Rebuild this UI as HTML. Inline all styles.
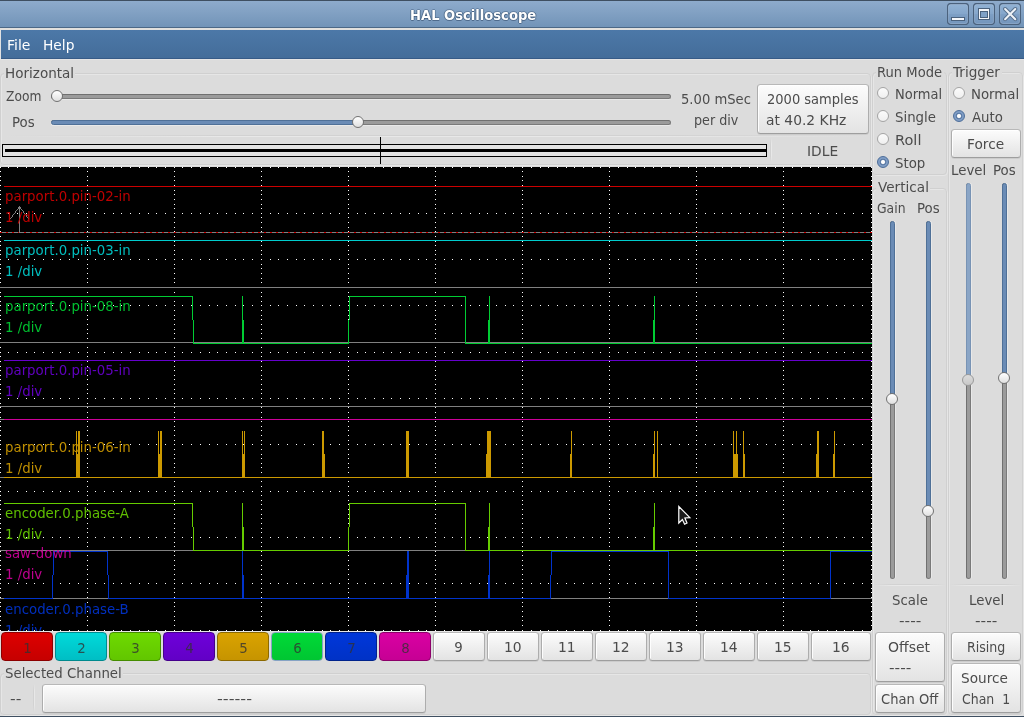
<!DOCTYPE html>
<html lang="en"><head><meta charset="utf-8"><title>HAL Oscilloscope</title>
<style>
html,body{margin:0;padding:0}
body{background:#dcdcdc;overflow:hidden}
#win{will-change:transform;position:relative;width:1024px;height:717px;overflow:hidden;background:#dcdcdc;
 font-family:"DejaVu Sans","Liberation Sans",sans-serif;font-size:13.333px;line-height:15px;color:#4c4c4c}
#win *{position:absolute;box-sizing:border-box}
.t{white-space:pre;height:15px}
#titlebar{left:0;top:0;width:1024px;height:28px;background:linear-gradient(#8eabcc,#7294b8);
 border-top:1px solid #3f4f61;border-bottom:1px solid #4c6886}
.title{color:#fff;font-weight:bold;text-shadow:0 1px 0 rgba(45,70,100,.55),0 -1px 0 rgba(45,70,100,.35),1px 0 0 rgba(45,70,100,.45),-1px 0 0 rgba(45,70,100,.45)}
.wbs{display:block}
#lightline{left:0;top:28px;width:1024px;height:2px;background:#e1e0dd}
#menubar{left:1px;top:30px;width:1023px;height:29px;background:linear-gradient(#4c78a8,#446d9a);
 border-bottom:1px solid #375b87;color:#fff}
#menubar .t{color:#fff}
.btn{border:1px solid #adadad;border-top-color:#b8b8b8;border-bottom-color:#9e9e9e;border-radius:3.5px;background:linear-gradient(#fcfcfc,#e3e3e3);
 box-shadow:0 1px 0 rgba(0,0,0,.07),inset 1px 1px 0 rgba(255,255,255,.9)}
.radio{width:12px;height:12px;border-radius:50%;border:1px solid #a4a4a4;background:linear-gradient(#fbfbfb,#efefef)}
.radio.on{border-color:#4c6d99;background:radial-gradient(circle at 50% 50%,#fff 0,#fff 1.5px,#4e6f9c 2.7px,#809ec6 3.7px,#7a98c0 100%)}
.trk{background:#9b9b9b;border:1px solid #7a7a7a;border-radius:3px}
.trk.h{height:5px;border-top-color:#707070;box-shadow:0 1px 0 #e9e9e9}
.trk.v{width:5px;border-left-color:#707070;box-shadow:1px 0 0 #e9e9e9}
.trk.fill{background:#6a8bb5;border-color:#4f7097}
.trk.fill.dis{background:#8aa5c6;border-color:#7893b4}
.knob{width:12px;height:12px;border-radius:50%;border:1px solid #727272;background:linear-gradient(#ffffff,#e0e0e0)}
.knob.dis{background:linear-gradient(#dcdcdc,#c8c8c8);border-color:#9a9a9a}
.frame{border:1px solid #d0d0d0;border-radius:4px}
.frame.lt{border-color:#e6e6e6}
.gap{background:#dcdcdc}
.sepv{width:2px;background:linear-gradient(rgba(210,210,210,0),#d2d2d2 25%,#d2d2d2 75%,rgba(210,210,210,0)) 0 0/1px 100% no-repeat,linear-gradient(rgba(232,232,232,0),#e8e8e8 25%,#e8e8e8 75%,rgba(232,232,232,0)) 1px 0/1px 100% no-repeat}
.seph{height:2px;background:linear-gradient(90deg,rgba(210,210,210,0),#d2d2d2 25%,#d2d2d2 75%,rgba(210,210,210,0)) 0 0/100% 1px no-repeat,linear-gradient(90deg,rgba(232,232,232,0),#e8e8e8 25%,#e8e8e8 75%,rgba(232,232,232,0)) 0 1px/100% 1px no-repeat}
.scope{display:block}
.chb{border:1px solid #888;border-radius:4px}
.chb .t{color:rgba(50,50,50,.8)}
.chb .t.c,.btn .t.c{left:0;right:0;text-align:center}
</style></head><body><div id="win">
<div id="titlebar"></div>
<div class="t title" style="top:8px;left:410.02px;transform:scaleX(0.9843);transform-origin:0 0;">HAL Oscilloscope</div>
<svg width="0" height="0" style="left:0;top:0"><defs><linearGradient id="wbg" x1="0" y1="0" x2="0" y2="1"><stop offset="0" stop-color="#93b3d5"/><stop offset=".5" stop-color="#84a6cb"/><stop offset=".52" stop-color="#7d9fc5"/><stop offset="1" stop-color="#7395bb"/></linearGradient></defs></svg>
<svg class="wbs" style="left:947px;top:3px" width="22" height="22" viewBox="0 0 22 22"><rect x=".5" y=".5" width="21" height="21" rx="3.2" fill="url(#wbg)" stroke="#4b627d" stroke-width="1.25"/><rect x="1.5" y="1.5" width="19" height="19" rx="2.2" fill="none" stroke="#fff" stroke-opacity=".13"/><g shape-rendering="crispEdges"><rect x="4" y="14" width="14" height="4" fill="#4b627d"/><rect x="5" y="15" width="12" height="2" fill="#f4f6f9"/></g></svg>
<svg class="wbs" style="left:973px;top:3px" width="22" height="22" viewBox="0 0 22 22"><rect x=".5" y=".5" width="21" height="21" rx="3.2" fill="url(#wbg)" stroke="#4b627d" stroke-width="1.25"/><rect x="1.5" y="1.5" width="19" height="19" rx="2.2" fill="none" stroke="#fff" stroke-opacity=".13"/><g shape-rendering="crispEdges"><rect x="5" y="5" width="12" height="12" fill="#4b627d"/><rect x="6" y="6" width="10" height="10" fill="#f4f6f9"/><rect x="7" y="8" width="8" height="7" fill="#4b627d"/><rect x="8" y="9" width="6" height="5" fill="#7fa1c6"/></g></svg>
<svg class="wbs" style="left:999px;top:3px" width="22" height="22" viewBox="0 0 22 22"><rect x=".5" y=".5" width="21" height="21" rx="3.2" fill="url(#wbg)" stroke="#4b627d" stroke-width="1.25"/><rect x="1.5" y="1.5" width="19" height="19" rx="2.2" fill="none" stroke="#fff" stroke-opacity=".13"/><path d="M6.1 6L16.3 16.2M16.3 6L6.1 16.2" stroke="#4b627d" stroke-width="4" stroke-linecap="round" fill="none" stroke-opacity=".8"/><path d="M6.1 6L16.3 16.2M16.3 6L6.1 16.2" stroke="#eef2f7" stroke-width="2" stroke-linecap="round" fill="none"/></svg>
<div id="lightline"></div>
<div id="menubar"><div class="t" style="top:8px;left:5.95px;transform:scaleX(1.0476);transform-origin:0 0;">File</div><div class="t" style="top:8px;left:41.97px;transform:scaleX(1.0345);transform-origin:0 0;">Help</div></div>
<div style="left:0;top:30px;width:1px;height:29px;background:#e2e2e2"></div>
<div style="left:0;top:59px;width:1024px;height:1px;background:#e4e4e4"></div>
<div class="frame lt" style="left:1px;top:74px;width:871px;height:92px"></div><div class="frame" style="left:0px;top:73px;width:871px;height:92px"></div><div class="gap" style="left:4px;top:73px;width:71px;height:2px"></div>
<div class="t" style="top:66px;left:4.98px;transform:scaleX(1.0152);transform-origin:0 0;">Horizontal</div>
<div class="t" style="top:89px;left:6.00px;transform:scaleX(0.9211);transform-origin:0 0;">Zoom</div>
<div class="trk h" style="left:51px;top:94px;width:620px"></div><div class="knob" style="left:51px;top:90px"></div>
<div class="t" style="top:115px;left:12.00px;">Pos</div>
<div class="trk h" style="left:51px;top:120px;width:620px"></div><div class="trk h fill" style="left:51px;top:120px;width:308px"></div><div class="knob" style="left:352px;top:116px"></div>
<div class="t" style="top:92px;left:681.01px;transform:scaleX(0.9855);transform-origin:0 0;">5.00 mSec</div>
<div class="t" style="top:113px;left:694.04px;transform:scaleX(0.9556);transform-origin:0 0;">per div</div>
<div class="btn " style="left:757px;top:84px;width:112px;height:50px"><div class="t" style="top:7px;left:9.02px;transform:scaleX(0.9783);transform-origin:0 0;">2000 samples</div><div class="t" style="top:28px;left:7.96px;transform:scaleX(1.0395);transform-origin:0 0;">at 40.2 KHz</div></div>
<div class="seph" style="left:2px;top:135px;width:868px"></div>
<div style="left:2px;top:144px;width:765px;height:13px;border:1px solid #000;background:#e2e2e2"></div>
<div style="left:5px;top:149px;width:762px;height:3px;background:#000"></div>
<div style="left:380px;top:137px;width:1px;height:27px;background:#000"></div>
<div class="sepv" style="left:770px;top:138px;height:24px"></div>
<div class="t" style="top:144px;left:806.96px;transform:scaleX(1.0357);transform-origin:0 0;">IDLE</div>
<svg class="scope" width="872" height="464" viewBox="0 0 872 464" shape-rendering="crispEdges" style="left:0px;top:167px"><rect width="872" height="464" fill="#000"/><path fill="#fff" d="M0 0h1v1h-1zM8 0h1v1h-1zM17 0h1v1h-1zM26 0h1v1h-1zM34 0h1v1h-1zM43 0h1v1h-1zM52 0h1v1h-1zM60 0h1v1h-1zM69 0h1v1h-1zM78 0h1v1h-1zM87 0h1v1h-1zM95 0h1v1h-1zM104 0h1v1h-1zM113 0h1v1h-1zM121 0h1v1h-1zM130 0h1v1h-1zM139 0h1v1h-1zM148 0h1v1h-1zM156 0h1v1h-1zM165 0h1v1h-1zM174 0h1v1h-1zM182 0h1v1h-1zM191 0h1v1h-1zM200 0h1v1h-1zM209 0h1v1h-1zM217 0h1v1h-1zM226 0h1v1h-1zM235 0h1v1h-1zM243 0h1v1h-1zM252 0h1v1h-1zM261 0h1v1h-1zM270 0h1v1h-1zM278 0h1v1h-1zM287 0h1v1h-1zM296 0h1v1h-1zM304 0h1v1h-1zM313 0h1v1h-1zM322 0h1v1h-1zM330 0h1v1h-1zM339 0h1v1h-1zM348 0h1v1h-1zM357 0h1v1h-1zM365 0h1v1h-1zM374 0h1v1h-1zM383 0h1v1h-1zM391 0h1v1h-1zM400 0h1v1h-1zM409 0h1v1h-1zM418 0h1v1h-1zM426 0h1v1h-1zM435 0h1v1h-1zM444 0h1v1h-1zM452 0h1v1h-1zM461 0h1v1h-1zM470 0h1v1h-1zM479 0h1v1h-1zM487 0h1v1h-1zM496 0h1v1h-1zM505 0h1v1h-1zM513 0h1v1h-1zM522 0h1v1h-1zM531 0h1v1h-1zM540 0h1v1h-1zM548 0h1v1h-1zM557 0h1v1h-1zM566 0h1v1h-1zM574 0h1v1h-1zM583 0h1v1h-1zM592 0h1v1h-1zM600 0h1v1h-1zM609 0h1v1h-1zM618 0h1v1h-1zM627 0h1v1h-1zM635 0h1v1h-1zM644 0h1v1h-1zM653 0h1v1h-1zM661 0h1v1h-1zM670 0h1v1h-1zM679 0h1v1h-1zM688 0h1v1h-1zM696 0h1v1h-1zM705 0h1v1h-1zM714 0h1v1h-1zM722 0h1v1h-1zM731 0h1v1h-1zM740 0h1v1h-1zM749 0h1v1h-1zM757 0h1v1h-1zM766 0h1v1h-1zM775 0h1v1h-1zM783 0h1v1h-1zM792 0h1v1h-1zM801 0h1v1h-1zM810 0h1v1h-1zM818 0h1v1h-1zM827 0h1v1h-1zM836 0h1v1h-1zM844 0h1v1h-1zM853 0h1v1h-1zM862 0h1v1h-1zM871 0h1v1h-1zM0 4h1v1h-1zM87 4h1v1h-1zM174 4h1v1h-1zM261 4h1v1h-1zM348 4h1v1h-1zM435 4h1v1h-1zM522 4h1v1h-1zM609 4h1v1h-1zM696 4h1v1h-1zM783 4h1v1h-1zM871 4h1v1h-1zM0 9h1v1h-1zM87 9h1v1h-1zM174 9h1v1h-1zM261 9h1v1h-1zM348 9h1v1h-1zM435 9h1v1h-1zM522 9h1v1h-1zM609 9h1v1h-1zM696 9h1v1h-1zM783 9h1v1h-1zM871 9h1v1h-1zM0 13h1v1h-1zM87 13h1v1h-1zM174 13h1v1h-1zM261 13h1v1h-1zM348 13h1v1h-1zM435 13h1v1h-1zM522 13h1v1h-1zM609 13h1v1h-1zM696 13h1v1h-1zM783 13h1v1h-1zM871 13h1v1h-1zM0 18h1v1h-1zM87 18h1v1h-1zM174 18h1v1h-1zM261 18h1v1h-1zM348 18h1v1h-1zM435 18h1v1h-1zM522 18h1v1h-1zM609 18h1v1h-1zM696 18h1v1h-1zM783 18h1v1h-1zM871 18h1v1h-1zM0 23h1v1h-1zM87 23h1v1h-1zM174 23h1v1h-1zM261 23h1v1h-1zM348 23h1v1h-1zM435 23h1v1h-1zM522 23h1v1h-1zM609 23h1v1h-1zM696 23h1v1h-1zM783 23h1v1h-1zM871 23h1v1h-1zM0 27h1v1h-1zM87 27h1v1h-1zM174 27h1v1h-1zM261 27h1v1h-1zM348 27h1v1h-1zM435 27h1v1h-1zM522 27h1v1h-1zM609 27h1v1h-1zM696 27h1v1h-1zM783 27h1v1h-1zM871 27h1v1h-1zM0 32h1v1h-1zM87 32h1v1h-1zM174 32h1v1h-1zM261 32h1v1h-1zM348 32h1v1h-1zM435 32h1v1h-1zM522 32h1v1h-1zM609 32h1v1h-1zM696 32h1v1h-1zM783 32h1v1h-1zM871 32h1v1h-1zM0 37h1v1h-1zM87 37h1v1h-1zM174 37h1v1h-1zM261 37h1v1h-1zM348 37h1v1h-1zM435 37h1v1h-1zM522 37h1v1h-1zM609 37h1v1h-1zM696 37h1v1h-1zM783 37h1v1h-1zM871 37h1v1h-1zM0 41h1v1h-1zM87 41h1v1h-1zM174 41h1v1h-1zM261 41h1v1h-1zM348 41h1v1h-1zM435 41h1v1h-1zM522 41h1v1h-1zM609 41h1v1h-1zM696 41h1v1h-1zM783 41h1v1h-1zM871 41h1v1h-1zM0 46h1v1h-1zM8 46h1v1h-1zM17 46h1v1h-1zM26 46h1v1h-1zM34 46h1v1h-1zM43 46h1v1h-1zM52 46h1v1h-1zM60 46h1v1h-1zM69 46h1v1h-1zM78 46h1v1h-1zM87 46h1v1h-1zM95 46h1v1h-1zM104 46h1v1h-1zM113 46h1v1h-1zM121 46h1v1h-1zM130 46h1v1h-1zM139 46h1v1h-1zM148 46h1v1h-1zM156 46h1v1h-1zM165 46h1v1h-1zM174 46h1v1h-1zM182 46h1v1h-1zM191 46h1v1h-1zM200 46h1v1h-1zM209 46h1v1h-1zM217 46h1v1h-1zM226 46h1v1h-1zM235 46h1v1h-1zM243 46h1v1h-1zM252 46h1v1h-1zM261 46h1v1h-1zM270 46h1v1h-1zM278 46h1v1h-1zM287 46h1v1h-1zM296 46h1v1h-1zM304 46h1v1h-1zM313 46h1v1h-1zM322 46h1v1h-1zM330 46h1v1h-1zM339 46h1v1h-1zM348 46h1v1h-1zM357 46h1v1h-1zM365 46h1v1h-1zM374 46h1v1h-1zM383 46h1v1h-1zM391 46h1v1h-1zM400 46h1v1h-1zM409 46h1v1h-1zM418 46h1v1h-1zM426 46h1v1h-1zM435 46h1v1h-1zM444 46h1v1h-1zM452 46h1v1h-1zM461 46h1v1h-1zM470 46h1v1h-1zM479 46h1v1h-1zM487 46h1v1h-1zM496 46h1v1h-1zM505 46h1v1h-1zM513 46h1v1h-1zM522 46h1v1h-1zM531 46h1v1h-1zM540 46h1v1h-1zM548 46h1v1h-1zM557 46h1v1h-1zM566 46h1v1h-1zM574 46h1v1h-1zM583 46h1v1h-1zM592 46h1v1h-1zM600 46h1v1h-1zM609 46h1v1h-1zM618 46h1v1h-1zM627 46h1v1h-1zM635 46h1v1h-1zM644 46h1v1h-1zM653 46h1v1h-1zM661 46h1v1h-1zM670 46h1v1h-1zM679 46h1v1h-1zM688 46h1v1h-1zM696 46h1v1h-1zM705 46h1v1h-1zM714 46h1v1h-1zM722 46h1v1h-1zM731 46h1v1h-1zM740 46h1v1h-1zM749 46h1v1h-1zM757 46h1v1h-1zM766 46h1v1h-1zM775 46h1v1h-1zM783 46h1v1h-1zM792 46h1v1h-1zM801 46h1v1h-1zM810 46h1v1h-1zM818 46h1v1h-1zM827 46h1v1h-1zM836 46h1v1h-1zM844 46h1v1h-1zM853 46h1v1h-1zM862 46h1v1h-1zM871 46h1v1h-1zM0 50h1v1h-1zM87 50h1v1h-1zM174 50h1v1h-1zM261 50h1v1h-1zM348 50h1v1h-1zM435 50h1v1h-1zM522 50h1v1h-1zM609 50h1v1h-1zM696 50h1v1h-1zM783 50h1v1h-1zM871 50h1v1h-1zM0 55h1v1h-1zM87 55h1v1h-1zM174 55h1v1h-1zM261 55h1v1h-1zM348 55h1v1h-1zM435 55h1v1h-1zM522 55h1v1h-1zM609 55h1v1h-1zM696 55h1v1h-1zM783 55h1v1h-1zM871 55h1v1h-1zM0 60h1v1h-1zM87 60h1v1h-1zM174 60h1v1h-1zM261 60h1v1h-1zM348 60h1v1h-1zM435 60h1v1h-1zM522 60h1v1h-1zM609 60h1v1h-1zM696 60h1v1h-1zM783 60h1v1h-1zM871 60h1v1h-1zM0 64h1v1h-1zM87 64h1v1h-1zM174 64h1v1h-1zM261 64h1v1h-1zM348 64h1v1h-1zM435 64h1v1h-1zM522 64h1v1h-1zM609 64h1v1h-1zM696 64h1v1h-1zM783 64h1v1h-1zM871 64h1v1h-1zM0 69h1v1h-1zM87 69h1v1h-1zM174 69h1v1h-1zM261 69h1v1h-1zM348 69h1v1h-1zM435 69h1v1h-1zM522 69h1v1h-1zM609 69h1v1h-1zM696 69h1v1h-1zM783 69h1v1h-1zM871 69h1v1h-1zM0 74h1v1h-1zM87 74h1v1h-1zM174 74h1v1h-1zM261 74h1v1h-1zM348 74h1v1h-1zM435 74h1v1h-1zM522 74h1v1h-1zM609 74h1v1h-1zM696 74h1v1h-1zM783 74h1v1h-1zM871 74h1v1h-1zM0 78h1v1h-1zM87 78h1v1h-1zM174 78h1v1h-1zM261 78h1v1h-1zM348 78h1v1h-1zM435 78h1v1h-1zM522 78h1v1h-1zM609 78h1v1h-1zM696 78h1v1h-1zM783 78h1v1h-1zM871 78h1v1h-1zM0 83h1v1h-1zM87 83h1v1h-1zM174 83h1v1h-1zM261 83h1v1h-1zM348 83h1v1h-1zM435 83h1v1h-1zM522 83h1v1h-1zM609 83h1v1h-1zM696 83h1v1h-1zM783 83h1v1h-1zM871 83h1v1h-1zM0 87h1v1h-1zM87 87h1v1h-1zM174 87h1v1h-1zM261 87h1v1h-1zM348 87h1v1h-1zM435 87h1v1h-1zM522 87h1v1h-1zM609 87h1v1h-1zM696 87h1v1h-1zM783 87h1v1h-1zM871 87h1v1h-1zM0 92h1v1h-1zM8 92h1v1h-1zM17 92h1v1h-1zM26 92h1v1h-1zM34 92h1v1h-1zM43 92h1v1h-1zM52 92h1v1h-1zM60 92h1v1h-1zM69 92h1v1h-1zM78 92h1v1h-1zM87 92h1v1h-1zM95 92h1v1h-1zM104 92h1v1h-1zM113 92h1v1h-1zM121 92h1v1h-1zM130 92h1v1h-1zM139 92h1v1h-1zM148 92h1v1h-1zM156 92h1v1h-1zM165 92h1v1h-1zM174 92h1v1h-1zM182 92h1v1h-1zM191 92h1v1h-1zM200 92h1v1h-1zM209 92h1v1h-1zM217 92h1v1h-1zM226 92h1v1h-1zM235 92h1v1h-1zM243 92h1v1h-1zM252 92h1v1h-1zM261 92h1v1h-1zM270 92h1v1h-1zM278 92h1v1h-1zM287 92h1v1h-1zM296 92h1v1h-1zM304 92h1v1h-1zM313 92h1v1h-1zM322 92h1v1h-1zM330 92h1v1h-1zM339 92h1v1h-1zM348 92h1v1h-1zM357 92h1v1h-1zM365 92h1v1h-1zM374 92h1v1h-1zM383 92h1v1h-1zM391 92h1v1h-1zM400 92h1v1h-1zM409 92h1v1h-1zM418 92h1v1h-1zM426 92h1v1h-1zM435 92h1v1h-1zM444 92h1v1h-1zM452 92h1v1h-1zM461 92h1v1h-1zM470 92h1v1h-1zM479 92h1v1h-1zM487 92h1v1h-1zM496 92h1v1h-1zM505 92h1v1h-1zM513 92h1v1h-1zM522 92h1v1h-1zM531 92h1v1h-1zM540 92h1v1h-1zM548 92h1v1h-1zM557 92h1v1h-1zM566 92h1v1h-1zM574 92h1v1h-1zM583 92h1v1h-1zM592 92h1v1h-1zM600 92h1v1h-1zM609 92h1v1h-1zM618 92h1v1h-1zM627 92h1v1h-1zM635 92h1v1h-1zM644 92h1v1h-1zM653 92h1v1h-1zM661 92h1v1h-1zM670 92h1v1h-1zM679 92h1v1h-1zM688 92h1v1h-1zM696 92h1v1h-1zM705 92h1v1h-1zM714 92h1v1h-1zM722 92h1v1h-1zM731 92h1v1h-1zM740 92h1v1h-1zM749 92h1v1h-1zM757 92h1v1h-1zM766 92h1v1h-1zM775 92h1v1h-1zM783 92h1v1h-1zM792 92h1v1h-1zM801 92h1v1h-1zM810 92h1v1h-1zM818 92h1v1h-1zM827 92h1v1h-1zM836 92h1v1h-1zM844 92h1v1h-1zM853 92h1v1h-1zM862 92h1v1h-1zM871 92h1v1h-1zM0 97h1v1h-1zM87 97h1v1h-1zM174 97h1v1h-1zM261 97h1v1h-1zM348 97h1v1h-1zM435 97h1v1h-1zM522 97h1v1h-1zM609 97h1v1h-1zM696 97h1v1h-1zM783 97h1v1h-1zM871 97h1v1h-1zM0 101h1v1h-1zM87 101h1v1h-1zM174 101h1v1h-1zM261 101h1v1h-1zM348 101h1v1h-1zM435 101h1v1h-1zM522 101h1v1h-1zM609 101h1v1h-1zM696 101h1v1h-1zM783 101h1v1h-1zM871 101h1v1h-1zM0 106h1v1h-1zM87 106h1v1h-1zM174 106h1v1h-1zM261 106h1v1h-1zM348 106h1v1h-1zM435 106h1v1h-1zM522 106h1v1h-1zM609 106h1v1h-1zM696 106h1v1h-1zM783 106h1v1h-1zM871 106h1v1h-1zM0 111h1v1h-1zM87 111h1v1h-1zM174 111h1v1h-1zM261 111h1v1h-1zM348 111h1v1h-1zM435 111h1v1h-1zM522 111h1v1h-1zM609 111h1v1h-1zM696 111h1v1h-1zM783 111h1v1h-1zM871 111h1v1h-1zM0 115h1v1h-1zM87 115h1v1h-1zM174 115h1v1h-1zM261 115h1v1h-1zM348 115h1v1h-1zM435 115h1v1h-1zM522 115h1v1h-1zM609 115h1v1h-1zM696 115h1v1h-1zM783 115h1v1h-1zM871 115h1v1h-1zM0 120h1v1h-1zM87 120h1v1h-1zM174 120h1v1h-1zM261 120h1v1h-1zM348 120h1v1h-1zM435 120h1v1h-1zM522 120h1v1h-1zM609 120h1v1h-1zM696 120h1v1h-1zM783 120h1v1h-1zM871 120h1v1h-1zM0 125h1v1h-1zM87 125h1v1h-1zM174 125h1v1h-1zM261 125h1v1h-1zM348 125h1v1h-1zM435 125h1v1h-1zM522 125h1v1h-1zM609 125h1v1h-1zM696 125h1v1h-1zM783 125h1v1h-1zM871 125h1v1h-1zM0 129h1v1h-1zM87 129h1v1h-1zM174 129h1v1h-1zM261 129h1v1h-1zM348 129h1v1h-1zM435 129h1v1h-1zM522 129h1v1h-1zM609 129h1v1h-1zM696 129h1v1h-1zM783 129h1v1h-1zM871 129h1v1h-1zM0 134h1v1h-1zM87 134h1v1h-1zM174 134h1v1h-1zM261 134h1v1h-1zM348 134h1v1h-1zM435 134h1v1h-1zM522 134h1v1h-1zM609 134h1v1h-1zM696 134h1v1h-1zM783 134h1v1h-1zM871 134h1v1h-1zM0 138h1v1h-1zM8 138h1v1h-1zM17 138h1v1h-1zM26 138h1v1h-1zM34 138h1v1h-1zM43 138h1v1h-1zM52 138h1v1h-1zM60 138h1v1h-1zM69 138h1v1h-1zM78 138h1v1h-1zM87 138h1v1h-1zM95 138h1v1h-1zM104 138h1v1h-1zM113 138h1v1h-1zM121 138h1v1h-1zM130 138h1v1h-1zM139 138h1v1h-1zM148 138h1v1h-1zM156 138h1v1h-1zM165 138h1v1h-1zM174 138h1v1h-1zM182 138h1v1h-1zM191 138h1v1h-1zM200 138h1v1h-1zM209 138h1v1h-1zM217 138h1v1h-1zM226 138h1v1h-1zM235 138h1v1h-1zM243 138h1v1h-1zM252 138h1v1h-1zM261 138h1v1h-1zM270 138h1v1h-1zM278 138h1v1h-1zM287 138h1v1h-1zM296 138h1v1h-1zM304 138h1v1h-1zM313 138h1v1h-1zM322 138h1v1h-1zM330 138h1v1h-1zM339 138h1v1h-1zM348 138h1v1h-1zM357 138h1v1h-1zM365 138h1v1h-1zM374 138h1v1h-1zM383 138h1v1h-1zM391 138h1v1h-1zM400 138h1v1h-1zM409 138h1v1h-1zM418 138h1v1h-1zM426 138h1v1h-1zM435 138h1v1h-1zM444 138h1v1h-1zM452 138h1v1h-1zM461 138h1v1h-1zM470 138h1v1h-1zM479 138h1v1h-1zM487 138h1v1h-1zM496 138h1v1h-1zM505 138h1v1h-1zM513 138h1v1h-1zM522 138h1v1h-1zM531 138h1v1h-1zM540 138h1v1h-1zM548 138h1v1h-1zM557 138h1v1h-1zM566 138h1v1h-1zM574 138h1v1h-1zM583 138h1v1h-1zM592 138h1v1h-1zM600 138h1v1h-1zM609 138h1v1h-1zM618 138h1v1h-1zM627 138h1v1h-1zM635 138h1v1h-1zM644 138h1v1h-1zM653 138h1v1h-1zM661 138h1v1h-1zM670 138h1v1h-1zM679 138h1v1h-1zM688 138h1v1h-1zM696 138h1v1h-1zM705 138h1v1h-1zM714 138h1v1h-1zM722 138h1v1h-1zM731 138h1v1h-1zM740 138h1v1h-1zM749 138h1v1h-1zM757 138h1v1h-1zM766 138h1v1h-1zM775 138h1v1h-1zM783 138h1v1h-1zM792 138h1v1h-1zM801 138h1v1h-1zM810 138h1v1h-1zM818 138h1v1h-1zM827 138h1v1h-1zM836 138h1v1h-1zM844 138h1v1h-1zM853 138h1v1h-1zM862 138h1v1h-1zM871 138h1v1h-1zM0 143h1v1h-1zM87 143h1v1h-1zM174 143h1v1h-1zM261 143h1v1h-1zM348 143h1v1h-1zM435 143h1v1h-1zM522 143h1v1h-1zM609 143h1v1h-1zM696 143h1v1h-1zM783 143h1v1h-1zM871 143h1v1h-1zM0 148h1v1h-1zM87 148h1v1h-1zM174 148h1v1h-1zM261 148h1v1h-1zM348 148h1v1h-1zM435 148h1v1h-1zM522 148h1v1h-1zM609 148h1v1h-1zM696 148h1v1h-1zM783 148h1v1h-1zM871 148h1v1h-1zM0 152h1v1h-1zM87 152h1v1h-1zM174 152h1v1h-1zM261 152h1v1h-1zM348 152h1v1h-1zM435 152h1v1h-1zM522 152h1v1h-1zM609 152h1v1h-1zM696 152h1v1h-1zM783 152h1v1h-1zM871 152h1v1h-1zM0 157h1v1h-1zM87 157h1v1h-1zM174 157h1v1h-1zM261 157h1v1h-1zM348 157h1v1h-1zM435 157h1v1h-1zM522 157h1v1h-1zM609 157h1v1h-1zM696 157h1v1h-1zM783 157h1v1h-1zM871 157h1v1h-1zM0 162h1v1h-1zM87 162h1v1h-1zM174 162h1v1h-1zM261 162h1v1h-1zM348 162h1v1h-1zM435 162h1v1h-1zM522 162h1v1h-1zM609 162h1v1h-1zM696 162h1v1h-1zM783 162h1v1h-1zM871 162h1v1h-1zM0 166h1v1h-1zM87 166h1v1h-1zM174 166h1v1h-1zM261 166h1v1h-1zM348 166h1v1h-1zM435 166h1v1h-1zM522 166h1v1h-1zM609 166h1v1h-1zM696 166h1v1h-1zM783 166h1v1h-1zM871 166h1v1h-1zM0 171h1v1h-1zM87 171h1v1h-1zM174 171h1v1h-1zM261 171h1v1h-1zM348 171h1v1h-1zM435 171h1v1h-1zM522 171h1v1h-1zM609 171h1v1h-1zM696 171h1v1h-1zM783 171h1v1h-1zM871 171h1v1h-1zM0 175h1v1h-1zM87 175h1v1h-1zM174 175h1v1h-1zM261 175h1v1h-1zM348 175h1v1h-1zM435 175h1v1h-1zM522 175h1v1h-1zM609 175h1v1h-1zM696 175h1v1h-1zM783 175h1v1h-1zM871 175h1v1h-1zM0 180h1v1h-1zM87 180h1v1h-1zM174 180h1v1h-1zM261 180h1v1h-1zM348 180h1v1h-1zM435 180h1v1h-1zM522 180h1v1h-1zM609 180h1v1h-1zM696 180h1v1h-1zM783 180h1v1h-1zM871 180h1v1h-1zM0 185h1v1h-1zM8 185h1v1h-1zM17 185h1v1h-1zM26 185h1v1h-1zM34 185h1v1h-1zM43 185h1v1h-1zM52 185h1v1h-1zM60 185h1v1h-1zM69 185h1v1h-1zM78 185h1v1h-1zM87 185h1v1h-1zM95 185h1v1h-1zM104 185h1v1h-1zM113 185h1v1h-1zM121 185h1v1h-1zM130 185h1v1h-1zM139 185h1v1h-1zM148 185h1v1h-1zM156 185h1v1h-1zM165 185h1v1h-1zM174 185h1v1h-1zM182 185h1v1h-1zM191 185h1v1h-1zM200 185h1v1h-1zM209 185h1v1h-1zM217 185h1v1h-1zM226 185h1v1h-1zM235 185h1v1h-1zM243 185h1v1h-1zM252 185h1v1h-1zM261 185h1v1h-1zM270 185h1v1h-1zM278 185h1v1h-1zM287 185h1v1h-1zM296 185h1v1h-1zM304 185h1v1h-1zM313 185h1v1h-1zM322 185h1v1h-1zM330 185h1v1h-1zM339 185h1v1h-1zM348 185h1v1h-1zM357 185h1v1h-1zM365 185h1v1h-1zM374 185h1v1h-1zM383 185h1v1h-1zM391 185h1v1h-1zM400 185h1v1h-1zM409 185h1v1h-1zM418 185h1v1h-1zM426 185h1v1h-1zM435 185h1v1h-1zM444 185h1v1h-1zM452 185h1v1h-1zM461 185h1v1h-1zM470 185h1v1h-1zM479 185h1v1h-1zM487 185h1v1h-1zM496 185h1v1h-1zM505 185h1v1h-1zM513 185h1v1h-1zM522 185h1v1h-1zM531 185h1v1h-1zM540 185h1v1h-1zM548 185h1v1h-1zM557 185h1v1h-1zM566 185h1v1h-1zM574 185h1v1h-1zM583 185h1v1h-1zM592 185h1v1h-1zM600 185h1v1h-1zM609 185h1v1h-1zM618 185h1v1h-1zM627 185h1v1h-1zM635 185h1v1h-1zM644 185h1v1h-1zM653 185h1v1h-1zM661 185h1v1h-1zM670 185h1v1h-1zM679 185h1v1h-1zM688 185h1v1h-1zM696 185h1v1h-1zM705 185h1v1h-1zM714 185h1v1h-1zM722 185h1v1h-1zM731 185h1v1h-1zM740 185h1v1h-1zM749 185h1v1h-1zM757 185h1v1h-1zM766 185h1v1h-1zM775 185h1v1h-1zM783 185h1v1h-1zM792 185h1v1h-1zM801 185h1v1h-1zM810 185h1v1h-1zM818 185h1v1h-1zM827 185h1v1h-1zM836 185h1v1h-1zM844 185h1v1h-1zM853 185h1v1h-1zM862 185h1v1h-1zM871 185h1v1h-1zM0 189h1v1h-1zM87 189h1v1h-1zM174 189h1v1h-1zM261 189h1v1h-1zM348 189h1v1h-1zM435 189h1v1h-1zM522 189h1v1h-1zM609 189h1v1h-1zM696 189h1v1h-1zM783 189h1v1h-1zM871 189h1v1h-1zM0 194h1v1h-1zM87 194h1v1h-1zM174 194h1v1h-1zM261 194h1v1h-1zM348 194h1v1h-1zM435 194h1v1h-1zM522 194h1v1h-1zM609 194h1v1h-1zM696 194h1v1h-1zM783 194h1v1h-1zM871 194h1v1h-1zM0 199h1v1h-1zM87 199h1v1h-1zM174 199h1v1h-1zM261 199h1v1h-1zM348 199h1v1h-1zM435 199h1v1h-1zM522 199h1v1h-1zM609 199h1v1h-1zM696 199h1v1h-1zM783 199h1v1h-1zM871 199h1v1h-1zM0 203h1v1h-1zM87 203h1v1h-1zM174 203h1v1h-1zM261 203h1v1h-1zM348 203h1v1h-1zM435 203h1v1h-1zM522 203h1v1h-1zM609 203h1v1h-1zM696 203h1v1h-1zM783 203h1v1h-1zM871 203h1v1h-1zM0 208h1v1h-1zM87 208h1v1h-1zM174 208h1v1h-1zM261 208h1v1h-1zM348 208h1v1h-1zM435 208h1v1h-1zM522 208h1v1h-1zM609 208h1v1h-1zM696 208h1v1h-1zM783 208h1v1h-1zM871 208h1v1h-1zM0 212h1v1h-1zM87 212h1v1h-1zM174 212h1v1h-1zM261 212h1v1h-1zM348 212h1v1h-1zM435 212h1v1h-1zM522 212h1v1h-1zM609 212h1v1h-1zM696 212h1v1h-1zM783 212h1v1h-1zM871 212h1v1h-1zM0 217h1v1h-1zM87 217h1v1h-1zM174 217h1v1h-1zM261 217h1v1h-1zM348 217h1v1h-1zM435 217h1v1h-1zM522 217h1v1h-1zM609 217h1v1h-1zM696 217h1v1h-1zM783 217h1v1h-1zM871 217h1v1h-1zM0 222h1v1h-1zM87 222h1v1h-1zM174 222h1v1h-1zM261 222h1v1h-1zM348 222h1v1h-1zM435 222h1v1h-1zM522 222h1v1h-1zM609 222h1v1h-1zM696 222h1v1h-1zM783 222h1v1h-1zM871 222h1v1h-1zM0 226h1v1h-1zM87 226h1v1h-1zM174 226h1v1h-1zM261 226h1v1h-1zM348 226h1v1h-1zM435 226h1v1h-1zM522 226h1v1h-1zM609 226h1v1h-1zM696 226h1v1h-1zM783 226h1v1h-1zM871 226h1v1h-1zM0 231h1v1h-1zM8 231h1v1h-1zM17 231h1v1h-1zM26 231h1v1h-1zM34 231h1v1h-1zM43 231h1v1h-1zM52 231h1v1h-1zM60 231h1v1h-1zM69 231h1v1h-1zM78 231h1v1h-1zM87 231h1v1h-1zM95 231h1v1h-1zM104 231h1v1h-1zM113 231h1v1h-1zM121 231h1v1h-1zM130 231h1v1h-1zM139 231h1v1h-1zM148 231h1v1h-1zM156 231h1v1h-1zM165 231h1v1h-1zM174 231h1v1h-1zM182 231h1v1h-1zM191 231h1v1h-1zM200 231h1v1h-1zM209 231h1v1h-1zM217 231h1v1h-1zM226 231h1v1h-1zM235 231h1v1h-1zM243 231h1v1h-1zM252 231h1v1h-1zM261 231h1v1h-1zM270 231h1v1h-1zM278 231h1v1h-1zM287 231h1v1h-1zM296 231h1v1h-1zM304 231h1v1h-1zM313 231h1v1h-1zM322 231h1v1h-1zM330 231h1v1h-1zM339 231h1v1h-1zM348 231h1v1h-1zM357 231h1v1h-1zM365 231h1v1h-1zM374 231h1v1h-1zM383 231h1v1h-1zM391 231h1v1h-1zM400 231h1v1h-1zM409 231h1v1h-1zM418 231h1v1h-1zM426 231h1v1h-1zM435 231h1v1h-1zM444 231h1v1h-1zM452 231h1v1h-1zM461 231h1v1h-1zM470 231h1v1h-1zM479 231h1v1h-1zM487 231h1v1h-1zM496 231h1v1h-1zM505 231h1v1h-1zM513 231h1v1h-1zM522 231h1v1h-1zM531 231h1v1h-1zM540 231h1v1h-1zM548 231h1v1h-1zM557 231h1v1h-1zM566 231h1v1h-1zM574 231h1v1h-1zM583 231h1v1h-1zM592 231h1v1h-1zM600 231h1v1h-1zM609 231h1v1h-1zM618 231h1v1h-1zM627 231h1v1h-1zM635 231h1v1h-1zM644 231h1v1h-1zM653 231h1v1h-1zM661 231h1v1h-1zM670 231h1v1h-1zM679 231h1v1h-1zM688 231h1v1h-1zM696 231h1v1h-1zM705 231h1v1h-1zM714 231h1v1h-1zM722 231h1v1h-1zM731 231h1v1h-1zM740 231h1v1h-1zM749 231h1v1h-1zM757 231h1v1h-1zM766 231h1v1h-1zM775 231h1v1h-1zM783 231h1v1h-1zM792 231h1v1h-1zM801 231h1v1h-1zM810 231h1v1h-1zM818 231h1v1h-1zM827 231h1v1h-1zM836 231h1v1h-1zM844 231h1v1h-1zM853 231h1v1h-1zM862 231h1v1h-1zM871 231h1v1h-1zM0 236h1v1h-1zM87 236h1v1h-1zM174 236h1v1h-1zM261 236h1v1h-1zM348 236h1v1h-1zM435 236h1v1h-1zM522 236h1v1h-1zM609 236h1v1h-1zM696 236h1v1h-1zM783 236h1v1h-1zM871 236h1v1h-1zM0 240h1v1h-1zM87 240h1v1h-1zM174 240h1v1h-1zM261 240h1v1h-1zM348 240h1v1h-1zM435 240h1v1h-1zM522 240h1v1h-1zM609 240h1v1h-1zM696 240h1v1h-1zM783 240h1v1h-1zM871 240h1v1h-1zM0 245h1v1h-1zM87 245h1v1h-1zM174 245h1v1h-1zM261 245h1v1h-1zM348 245h1v1h-1zM435 245h1v1h-1zM522 245h1v1h-1zM609 245h1v1h-1zM696 245h1v1h-1zM783 245h1v1h-1zM871 245h1v1h-1zM0 250h1v1h-1zM87 250h1v1h-1zM174 250h1v1h-1zM261 250h1v1h-1zM348 250h1v1h-1zM435 250h1v1h-1zM522 250h1v1h-1zM609 250h1v1h-1zM696 250h1v1h-1zM783 250h1v1h-1zM871 250h1v1h-1zM0 254h1v1h-1zM87 254h1v1h-1zM174 254h1v1h-1zM261 254h1v1h-1zM348 254h1v1h-1zM435 254h1v1h-1zM522 254h1v1h-1zM609 254h1v1h-1zM696 254h1v1h-1zM783 254h1v1h-1zM871 254h1v1h-1zM0 259h1v1h-1zM87 259h1v1h-1zM174 259h1v1h-1zM261 259h1v1h-1zM348 259h1v1h-1zM435 259h1v1h-1zM522 259h1v1h-1zM609 259h1v1h-1zM696 259h1v1h-1zM783 259h1v1h-1zM871 259h1v1h-1zM0 263h1v1h-1zM87 263h1v1h-1zM174 263h1v1h-1zM261 263h1v1h-1zM348 263h1v1h-1zM435 263h1v1h-1zM522 263h1v1h-1zM609 263h1v1h-1zM696 263h1v1h-1zM783 263h1v1h-1zM871 263h1v1h-1zM0 268h1v1h-1zM87 268h1v1h-1zM174 268h1v1h-1zM261 268h1v1h-1zM348 268h1v1h-1zM435 268h1v1h-1zM522 268h1v1h-1zM609 268h1v1h-1zM696 268h1v1h-1zM783 268h1v1h-1zM871 268h1v1h-1zM0 273h1v1h-1zM87 273h1v1h-1zM174 273h1v1h-1zM261 273h1v1h-1zM348 273h1v1h-1zM435 273h1v1h-1zM522 273h1v1h-1zM609 273h1v1h-1zM696 273h1v1h-1zM783 273h1v1h-1zM871 273h1v1h-1zM0 277h1v1h-1zM8 277h1v1h-1zM17 277h1v1h-1zM26 277h1v1h-1zM34 277h1v1h-1zM43 277h1v1h-1zM52 277h1v1h-1zM60 277h1v1h-1zM69 277h1v1h-1zM78 277h1v1h-1zM87 277h1v1h-1zM95 277h1v1h-1zM104 277h1v1h-1zM113 277h1v1h-1zM121 277h1v1h-1zM130 277h1v1h-1zM139 277h1v1h-1zM148 277h1v1h-1zM156 277h1v1h-1zM165 277h1v1h-1zM174 277h1v1h-1zM182 277h1v1h-1zM191 277h1v1h-1zM200 277h1v1h-1zM209 277h1v1h-1zM217 277h1v1h-1zM226 277h1v1h-1zM235 277h1v1h-1zM243 277h1v1h-1zM252 277h1v1h-1zM261 277h1v1h-1zM270 277h1v1h-1zM278 277h1v1h-1zM287 277h1v1h-1zM296 277h1v1h-1zM304 277h1v1h-1zM313 277h1v1h-1zM322 277h1v1h-1zM330 277h1v1h-1zM339 277h1v1h-1zM348 277h1v1h-1zM357 277h1v1h-1zM365 277h1v1h-1zM374 277h1v1h-1zM383 277h1v1h-1zM391 277h1v1h-1zM400 277h1v1h-1zM409 277h1v1h-1zM418 277h1v1h-1zM426 277h1v1h-1zM435 277h1v1h-1zM444 277h1v1h-1zM452 277h1v1h-1zM461 277h1v1h-1zM470 277h1v1h-1zM479 277h1v1h-1zM487 277h1v1h-1zM496 277h1v1h-1zM505 277h1v1h-1zM513 277h1v1h-1zM522 277h1v1h-1zM531 277h1v1h-1zM540 277h1v1h-1zM548 277h1v1h-1zM557 277h1v1h-1zM566 277h1v1h-1zM574 277h1v1h-1zM583 277h1v1h-1zM592 277h1v1h-1zM600 277h1v1h-1zM609 277h1v1h-1zM618 277h1v1h-1zM627 277h1v1h-1zM635 277h1v1h-1zM644 277h1v1h-1zM653 277h1v1h-1zM661 277h1v1h-1zM670 277h1v1h-1zM679 277h1v1h-1zM688 277h1v1h-1zM696 277h1v1h-1zM705 277h1v1h-1zM714 277h1v1h-1zM722 277h1v1h-1zM731 277h1v1h-1zM740 277h1v1h-1zM749 277h1v1h-1zM757 277h1v1h-1zM766 277h1v1h-1zM775 277h1v1h-1zM783 277h1v1h-1zM792 277h1v1h-1zM801 277h1v1h-1zM810 277h1v1h-1zM818 277h1v1h-1zM827 277h1v1h-1zM836 277h1v1h-1zM844 277h1v1h-1zM853 277h1v1h-1zM862 277h1v1h-1zM871 277h1v1h-1zM0 282h1v1h-1zM87 282h1v1h-1zM174 282h1v1h-1zM261 282h1v1h-1zM348 282h1v1h-1zM435 282h1v1h-1zM522 282h1v1h-1zM609 282h1v1h-1zM696 282h1v1h-1zM783 282h1v1h-1zM871 282h1v1h-1zM0 287h1v1h-1zM87 287h1v1h-1zM174 287h1v1h-1zM261 287h1v1h-1zM348 287h1v1h-1zM435 287h1v1h-1zM522 287h1v1h-1zM609 287h1v1h-1zM696 287h1v1h-1zM783 287h1v1h-1zM871 287h1v1h-1zM0 291h1v1h-1zM87 291h1v1h-1zM174 291h1v1h-1zM261 291h1v1h-1zM348 291h1v1h-1zM435 291h1v1h-1zM522 291h1v1h-1zM609 291h1v1h-1zM696 291h1v1h-1zM783 291h1v1h-1zM871 291h1v1h-1zM0 296h1v1h-1zM87 296h1v1h-1zM174 296h1v1h-1zM261 296h1v1h-1zM348 296h1v1h-1zM435 296h1v1h-1zM522 296h1v1h-1zM609 296h1v1h-1zM696 296h1v1h-1zM783 296h1v1h-1zM871 296h1v1h-1zM0 300h1v1h-1zM87 300h1v1h-1zM174 300h1v1h-1zM261 300h1v1h-1zM348 300h1v1h-1zM435 300h1v1h-1zM522 300h1v1h-1zM609 300h1v1h-1zM696 300h1v1h-1zM783 300h1v1h-1zM871 300h1v1h-1zM0 305h1v1h-1zM87 305h1v1h-1zM174 305h1v1h-1zM261 305h1v1h-1zM348 305h1v1h-1zM435 305h1v1h-1zM522 305h1v1h-1zM609 305h1v1h-1zM696 305h1v1h-1zM783 305h1v1h-1zM871 305h1v1h-1zM0 310h1v1h-1zM87 310h1v1h-1zM174 310h1v1h-1zM261 310h1v1h-1zM348 310h1v1h-1zM435 310h1v1h-1zM522 310h1v1h-1zM609 310h1v1h-1zM696 310h1v1h-1zM783 310h1v1h-1zM871 310h1v1h-1zM0 314h1v1h-1zM87 314h1v1h-1zM174 314h1v1h-1zM261 314h1v1h-1zM348 314h1v1h-1zM435 314h1v1h-1zM522 314h1v1h-1zM609 314h1v1h-1zM696 314h1v1h-1zM783 314h1v1h-1zM871 314h1v1h-1zM0 319h1v1h-1zM87 319h1v1h-1zM174 319h1v1h-1zM261 319h1v1h-1zM348 319h1v1h-1zM435 319h1v1h-1zM522 319h1v1h-1zM609 319h1v1h-1zM696 319h1v1h-1zM783 319h1v1h-1zM871 319h1v1h-1zM0 324h1v1h-1zM8 324h1v1h-1zM17 324h1v1h-1zM26 324h1v1h-1zM34 324h1v1h-1zM43 324h1v1h-1zM52 324h1v1h-1zM60 324h1v1h-1zM69 324h1v1h-1zM78 324h1v1h-1zM87 324h1v1h-1zM95 324h1v1h-1zM104 324h1v1h-1zM113 324h1v1h-1zM121 324h1v1h-1zM130 324h1v1h-1zM139 324h1v1h-1zM148 324h1v1h-1zM156 324h1v1h-1zM165 324h1v1h-1zM174 324h1v1h-1zM182 324h1v1h-1zM191 324h1v1h-1zM200 324h1v1h-1zM209 324h1v1h-1zM217 324h1v1h-1zM226 324h1v1h-1zM235 324h1v1h-1zM243 324h1v1h-1zM252 324h1v1h-1zM261 324h1v1h-1zM270 324h1v1h-1zM278 324h1v1h-1zM287 324h1v1h-1zM296 324h1v1h-1zM304 324h1v1h-1zM313 324h1v1h-1zM322 324h1v1h-1zM330 324h1v1h-1zM339 324h1v1h-1zM348 324h1v1h-1zM357 324h1v1h-1zM365 324h1v1h-1zM374 324h1v1h-1zM383 324h1v1h-1zM391 324h1v1h-1zM400 324h1v1h-1zM409 324h1v1h-1zM418 324h1v1h-1zM426 324h1v1h-1zM435 324h1v1h-1zM444 324h1v1h-1zM452 324h1v1h-1zM461 324h1v1h-1zM470 324h1v1h-1zM479 324h1v1h-1zM487 324h1v1h-1zM496 324h1v1h-1zM505 324h1v1h-1zM513 324h1v1h-1zM522 324h1v1h-1zM531 324h1v1h-1zM540 324h1v1h-1zM548 324h1v1h-1zM557 324h1v1h-1zM566 324h1v1h-1zM574 324h1v1h-1zM583 324h1v1h-1zM592 324h1v1h-1zM600 324h1v1h-1zM609 324h1v1h-1zM618 324h1v1h-1zM627 324h1v1h-1zM635 324h1v1h-1zM644 324h1v1h-1zM653 324h1v1h-1zM661 324h1v1h-1zM670 324h1v1h-1zM679 324h1v1h-1zM688 324h1v1h-1zM696 324h1v1h-1zM705 324h1v1h-1zM714 324h1v1h-1zM722 324h1v1h-1zM731 324h1v1h-1zM740 324h1v1h-1zM749 324h1v1h-1zM757 324h1v1h-1zM766 324h1v1h-1zM775 324h1v1h-1zM783 324h1v1h-1zM792 324h1v1h-1zM801 324h1v1h-1zM810 324h1v1h-1zM818 324h1v1h-1zM827 324h1v1h-1zM836 324h1v1h-1zM844 324h1v1h-1zM853 324h1v1h-1zM862 324h1v1h-1zM871 324h1v1h-1zM0 328h1v1h-1zM87 328h1v1h-1zM174 328h1v1h-1zM261 328h1v1h-1zM348 328h1v1h-1zM435 328h1v1h-1zM522 328h1v1h-1zM609 328h1v1h-1zM696 328h1v1h-1zM783 328h1v1h-1zM871 328h1v1h-1zM0 333h1v1h-1zM87 333h1v1h-1zM174 333h1v1h-1zM261 333h1v1h-1zM348 333h1v1h-1zM435 333h1v1h-1zM522 333h1v1h-1zM609 333h1v1h-1zM696 333h1v1h-1zM783 333h1v1h-1zM871 333h1v1h-1zM0 337h1v1h-1zM87 337h1v1h-1zM174 337h1v1h-1zM261 337h1v1h-1zM348 337h1v1h-1zM435 337h1v1h-1zM522 337h1v1h-1zM609 337h1v1h-1zM696 337h1v1h-1zM783 337h1v1h-1zM871 337h1v1h-1zM0 342h1v1h-1zM87 342h1v1h-1zM174 342h1v1h-1zM261 342h1v1h-1zM348 342h1v1h-1zM435 342h1v1h-1zM522 342h1v1h-1zM609 342h1v1h-1zM696 342h1v1h-1zM783 342h1v1h-1zM871 342h1v1h-1zM0 347h1v1h-1zM87 347h1v1h-1zM174 347h1v1h-1zM261 347h1v1h-1zM348 347h1v1h-1zM435 347h1v1h-1zM522 347h1v1h-1zM609 347h1v1h-1zM696 347h1v1h-1zM783 347h1v1h-1zM871 347h1v1h-1zM0 351h1v1h-1zM87 351h1v1h-1zM174 351h1v1h-1zM261 351h1v1h-1zM348 351h1v1h-1zM435 351h1v1h-1zM522 351h1v1h-1zM609 351h1v1h-1zM696 351h1v1h-1zM783 351h1v1h-1zM871 351h1v1h-1zM0 356h1v1h-1zM87 356h1v1h-1zM174 356h1v1h-1zM261 356h1v1h-1zM348 356h1v1h-1zM435 356h1v1h-1zM522 356h1v1h-1zM609 356h1v1h-1zM696 356h1v1h-1zM783 356h1v1h-1zM871 356h1v1h-1zM0 361h1v1h-1zM87 361h1v1h-1zM174 361h1v1h-1zM261 361h1v1h-1zM348 361h1v1h-1zM435 361h1v1h-1zM522 361h1v1h-1zM609 361h1v1h-1zM696 361h1v1h-1zM783 361h1v1h-1zM871 361h1v1h-1zM0 365h1v1h-1zM87 365h1v1h-1zM174 365h1v1h-1zM261 365h1v1h-1zM348 365h1v1h-1zM435 365h1v1h-1zM522 365h1v1h-1zM609 365h1v1h-1zM696 365h1v1h-1zM783 365h1v1h-1zM871 365h1v1h-1zM0 370h1v1h-1zM8 370h1v1h-1zM17 370h1v1h-1zM26 370h1v1h-1zM34 370h1v1h-1zM43 370h1v1h-1zM52 370h1v1h-1zM60 370h1v1h-1zM69 370h1v1h-1zM78 370h1v1h-1zM87 370h1v1h-1zM95 370h1v1h-1zM104 370h1v1h-1zM113 370h1v1h-1zM121 370h1v1h-1zM130 370h1v1h-1zM139 370h1v1h-1zM148 370h1v1h-1zM156 370h1v1h-1zM165 370h1v1h-1zM174 370h1v1h-1zM182 370h1v1h-1zM191 370h1v1h-1zM200 370h1v1h-1zM209 370h1v1h-1zM217 370h1v1h-1zM226 370h1v1h-1zM235 370h1v1h-1zM243 370h1v1h-1zM252 370h1v1h-1zM261 370h1v1h-1zM270 370h1v1h-1zM278 370h1v1h-1zM287 370h1v1h-1zM296 370h1v1h-1zM304 370h1v1h-1zM313 370h1v1h-1zM322 370h1v1h-1zM330 370h1v1h-1zM339 370h1v1h-1zM348 370h1v1h-1zM357 370h1v1h-1zM365 370h1v1h-1zM374 370h1v1h-1zM383 370h1v1h-1zM391 370h1v1h-1zM400 370h1v1h-1zM409 370h1v1h-1zM418 370h1v1h-1zM426 370h1v1h-1zM435 370h1v1h-1zM444 370h1v1h-1zM452 370h1v1h-1zM461 370h1v1h-1zM470 370h1v1h-1zM479 370h1v1h-1zM487 370h1v1h-1zM496 370h1v1h-1zM505 370h1v1h-1zM513 370h1v1h-1zM522 370h1v1h-1zM531 370h1v1h-1zM540 370h1v1h-1zM548 370h1v1h-1zM557 370h1v1h-1zM566 370h1v1h-1zM574 370h1v1h-1zM583 370h1v1h-1zM592 370h1v1h-1zM600 370h1v1h-1zM609 370h1v1h-1zM618 370h1v1h-1zM627 370h1v1h-1zM635 370h1v1h-1zM644 370h1v1h-1zM653 370h1v1h-1zM661 370h1v1h-1zM670 370h1v1h-1zM679 370h1v1h-1zM688 370h1v1h-1zM696 370h1v1h-1zM705 370h1v1h-1zM714 370h1v1h-1zM722 370h1v1h-1zM731 370h1v1h-1zM740 370h1v1h-1zM749 370h1v1h-1zM757 370h1v1h-1zM766 370h1v1h-1zM775 370h1v1h-1zM783 370h1v1h-1zM792 370h1v1h-1zM801 370h1v1h-1zM810 370h1v1h-1zM818 370h1v1h-1zM827 370h1v1h-1zM836 370h1v1h-1zM844 370h1v1h-1zM853 370h1v1h-1zM862 370h1v1h-1zM871 370h1v1h-1zM0 375h1v1h-1zM87 375h1v1h-1zM174 375h1v1h-1zM261 375h1v1h-1zM348 375h1v1h-1zM435 375h1v1h-1zM522 375h1v1h-1zM609 375h1v1h-1zM696 375h1v1h-1zM783 375h1v1h-1zM871 375h1v1h-1zM0 379h1v1h-1zM87 379h1v1h-1zM174 379h1v1h-1zM261 379h1v1h-1zM348 379h1v1h-1zM435 379h1v1h-1zM522 379h1v1h-1zM609 379h1v1h-1zM696 379h1v1h-1zM783 379h1v1h-1zM871 379h1v1h-1zM0 384h1v1h-1zM87 384h1v1h-1zM174 384h1v1h-1zM261 384h1v1h-1zM348 384h1v1h-1zM435 384h1v1h-1zM522 384h1v1h-1zM609 384h1v1h-1zM696 384h1v1h-1zM783 384h1v1h-1zM871 384h1v1h-1zM0 388h1v1h-1zM87 388h1v1h-1zM174 388h1v1h-1zM261 388h1v1h-1zM348 388h1v1h-1zM435 388h1v1h-1zM522 388h1v1h-1zM609 388h1v1h-1zM696 388h1v1h-1zM783 388h1v1h-1zM871 388h1v1h-1zM0 393h1v1h-1zM87 393h1v1h-1zM174 393h1v1h-1zM261 393h1v1h-1zM348 393h1v1h-1zM435 393h1v1h-1zM522 393h1v1h-1zM609 393h1v1h-1zM696 393h1v1h-1zM783 393h1v1h-1zM871 393h1v1h-1zM0 398h1v1h-1zM87 398h1v1h-1zM174 398h1v1h-1zM261 398h1v1h-1zM348 398h1v1h-1zM435 398h1v1h-1zM522 398h1v1h-1zM609 398h1v1h-1zM696 398h1v1h-1zM783 398h1v1h-1zM871 398h1v1h-1zM0 402h1v1h-1zM87 402h1v1h-1zM174 402h1v1h-1zM261 402h1v1h-1zM348 402h1v1h-1zM435 402h1v1h-1zM522 402h1v1h-1zM609 402h1v1h-1zM696 402h1v1h-1zM783 402h1v1h-1zM871 402h1v1h-1zM0 407h1v1h-1zM87 407h1v1h-1zM174 407h1v1h-1zM261 407h1v1h-1zM348 407h1v1h-1zM435 407h1v1h-1zM522 407h1v1h-1zM609 407h1v1h-1zM696 407h1v1h-1zM783 407h1v1h-1zM871 407h1v1h-1zM0 412h1v1h-1zM87 412h1v1h-1zM174 412h1v1h-1zM261 412h1v1h-1zM348 412h1v1h-1zM435 412h1v1h-1zM522 412h1v1h-1zM609 412h1v1h-1zM696 412h1v1h-1zM783 412h1v1h-1zM871 412h1v1h-1zM0 416h1v1h-1zM8 416h1v1h-1zM17 416h1v1h-1zM26 416h1v1h-1zM34 416h1v1h-1zM43 416h1v1h-1zM52 416h1v1h-1zM60 416h1v1h-1zM69 416h1v1h-1zM78 416h1v1h-1zM87 416h1v1h-1zM95 416h1v1h-1zM104 416h1v1h-1zM113 416h1v1h-1zM121 416h1v1h-1zM130 416h1v1h-1zM139 416h1v1h-1zM148 416h1v1h-1zM156 416h1v1h-1zM165 416h1v1h-1zM174 416h1v1h-1zM182 416h1v1h-1zM191 416h1v1h-1zM200 416h1v1h-1zM209 416h1v1h-1zM217 416h1v1h-1zM226 416h1v1h-1zM235 416h1v1h-1zM243 416h1v1h-1zM252 416h1v1h-1zM261 416h1v1h-1zM270 416h1v1h-1zM278 416h1v1h-1zM287 416h1v1h-1zM296 416h1v1h-1zM304 416h1v1h-1zM313 416h1v1h-1zM322 416h1v1h-1zM330 416h1v1h-1zM339 416h1v1h-1zM348 416h1v1h-1zM357 416h1v1h-1zM365 416h1v1h-1zM374 416h1v1h-1zM383 416h1v1h-1zM391 416h1v1h-1zM400 416h1v1h-1zM409 416h1v1h-1zM418 416h1v1h-1zM426 416h1v1h-1zM435 416h1v1h-1zM444 416h1v1h-1zM452 416h1v1h-1zM461 416h1v1h-1zM470 416h1v1h-1zM479 416h1v1h-1zM487 416h1v1h-1zM496 416h1v1h-1zM505 416h1v1h-1zM513 416h1v1h-1zM522 416h1v1h-1zM531 416h1v1h-1zM540 416h1v1h-1zM548 416h1v1h-1zM557 416h1v1h-1zM566 416h1v1h-1zM574 416h1v1h-1zM583 416h1v1h-1zM592 416h1v1h-1zM600 416h1v1h-1zM609 416h1v1h-1zM618 416h1v1h-1zM627 416h1v1h-1zM635 416h1v1h-1zM644 416h1v1h-1zM653 416h1v1h-1zM661 416h1v1h-1zM670 416h1v1h-1zM679 416h1v1h-1zM688 416h1v1h-1zM696 416h1v1h-1zM705 416h1v1h-1zM714 416h1v1h-1zM722 416h1v1h-1zM731 416h1v1h-1zM740 416h1v1h-1zM749 416h1v1h-1zM757 416h1v1h-1zM766 416h1v1h-1zM775 416h1v1h-1zM783 416h1v1h-1zM792 416h1v1h-1zM801 416h1v1h-1zM810 416h1v1h-1zM818 416h1v1h-1zM827 416h1v1h-1zM836 416h1v1h-1zM844 416h1v1h-1zM853 416h1v1h-1zM862 416h1v1h-1zM871 416h1v1h-1zM0 421h1v1h-1zM87 421h1v1h-1zM174 421h1v1h-1zM261 421h1v1h-1zM348 421h1v1h-1zM435 421h1v1h-1zM522 421h1v1h-1zM609 421h1v1h-1zM696 421h1v1h-1zM783 421h1v1h-1zM871 421h1v1h-1zM0 425h1v1h-1zM87 425h1v1h-1zM174 425h1v1h-1zM261 425h1v1h-1zM348 425h1v1h-1zM435 425h1v1h-1zM522 425h1v1h-1zM609 425h1v1h-1zM696 425h1v1h-1zM783 425h1v1h-1zM871 425h1v1h-1zM0 430h1v1h-1zM87 430h1v1h-1zM174 430h1v1h-1zM261 430h1v1h-1zM348 430h1v1h-1zM435 430h1v1h-1zM522 430h1v1h-1zM609 430h1v1h-1zM696 430h1v1h-1zM783 430h1v1h-1zM871 430h1v1h-1zM0 435h1v1h-1zM87 435h1v1h-1zM174 435h1v1h-1zM261 435h1v1h-1zM348 435h1v1h-1zM435 435h1v1h-1zM522 435h1v1h-1zM609 435h1v1h-1zM696 435h1v1h-1zM783 435h1v1h-1zM871 435h1v1h-1zM0 439h1v1h-1zM87 439h1v1h-1zM174 439h1v1h-1zM261 439h1v1h-1zM348 439h1v1h-1zM435 439h1v1h-1zM522 439h1v1h-1zM609 439h1v1h-1zM696 439h1v1h-1zM783 439h1v1h-1zM871 439h1v1h-1zM0 444h1v1h-1zM87 444h1v1h-1zM174 444h1v1h-1zM261 444h1v1h-1zM348 444h1v1h-1zM435 444h1v1h-1zM522 444h1v1h-1zM609 444h1v1h-1zM696 444h1v1h-1zM783 444h1v1h-1zM871 444h1v1h-1zM0 449h1v1h-1zM87 449h1v1h-1zM174 449h1v1h-1zM261 449h1v1h-1zM348 449h1v1h-1zM435 449h1v1h-1zM522 449h1v1h-1zM609 449h1v1h-1zM696 449h1v1h-1zM783 449h1v1h-1zM871 449h1v1h-1zM0 453h1v1h-1zM87 453h1v1h-1zM174 453h1v1h-1zM261 453h1v1h-1zM348 453h1v1h-1zM435 453h1v1h-1zM522 453h1v1h-1zM609 453h1v1h-1zM696 453h1v1h-1zM783 453h1v1h-1zM871 453h1v1h-1zM0 458h1v1h-1zM87 458h1v1h-1zM174 458h1v1h-1zM261 458h1v1h-1zM348 458h1v1h-1zM435 458h1v1h-1zM522 458h1v1h-1zM609 458h1v1h-1zM696 458h1v1h-1zM783 458h1v1h-1zM871 458h1v1h-1zM0 463h1v1h-1zM8 463h1v1h-1zM17 463h1v1h-1zM26 463h1v1h-1zM34 463h1v1h-1zM43 463h1v1h-1zM52 463h1v1h-1zM60 463h1v1h-1zM69 463h1v1h-1zM78 463h1v1h-1zM87 463h1v1h-1zM95 463h1v1h-1zM104 463h1v1h-1zM113 463h1v1h-1zM121 463h1v1h-1zM130 463h1v1h-1zM139 463h1v1h-1zM148 463h1v1h-1zM156 463h1v1h-1zM165 463h1v1h-1zM174 463h1v1h-1zM182 463h1v1h-1zM191 463h1v1h-1zM200 463h1v1h-1zM209 463h1v1h-1zM217 463h1v1h-1zM226 463h1v1h-1zM235 463h1v1h-1zM243 463h1v1h-1zM252 463h1v1h-1zM261 463h1v1h-1zM270 463h1v1h-1zM278 463h1v1h-1zM287 463h1v1h-1zM296 463h1v1h-1zM304 463h1v1h-1zM313 463h1v1h-1zM322 463h1v1h-1zM330 463h1v1h-1zM339 463h1v1h-1zM348 463h1v1h-1zM357 463h1v1h-1zM365 463h1v1h-1zM374 463h1v1h-1zM383 463h1v1h-1zM391 463h1v1h-1zM400 463h1v1h-1zM409 463h1v1h-1zM418 463h1v1h-1zM426 463h1v1h-1zM435 463h1v1h-1zM444 463h1v1h-1zM452 463h1v1h-1zM461 463h1v1h-1zM470 463h1v1h-1zM479 463h1v1h-1zM487 463h1v1h-1zM496 463h1v1h-1zM505 463h1v1h-1zM513 463h1v1h-1zM522 463h1v1h-1zM531 463h1v1h-1zM540 463h1v1h-1zM548 463h1v1h-1zM557 463h1v1h-1zM566 463h1v1h-1zM574 463h1v1h-1zM583 463h1v1h-1zM592 463h1v1h-1zM600 463h1v1h-1zM609 463h1v1h-1zM618 463h1v1h-1zM627 463h1v1h-1zM635 463h1v1h-1zM644 463h1v1h-1zM653 463h1v1h-1zM661 463h1v1h-1zM670 463h1v1h-1zM679 463h1v1h-1zM688 463h1v1h-1zM696 463h1v1h-1zM705 463h1v1h-1zM714 463h1v1h-1zM722 463h1v1h-1zM731 463h1v1h-1zM740 463h1v1h-1zM749 463h1v1h-1zM757 463h1v1h-1zM766 463h1v1h-1zM775 463h1v1h-1zM783 463h1v1h-1zM792 463h1v1h-1zM801 463h1v1h-1zM810 463h1v1h-1zM818 463h1v1h-1zM827 463h1v1h-1zM836 463h1v1h-1zM844 463h1v1h-1zM853 463h1v1h-1zM862 463h1v1h-1zM871 463h1v1h-1z"/><path fill="#808080" d="M0 65h872v1h-872zM0 120h872v1h-872zM0 175h872v1h-872zM0 239h872v1h-872zM0 252h872v1h-872zM0 310h872v1h-872zM0 383h872v1h-872zM0 431h872v1h-872z"/><path fill="#cc0000" d="M0 65h2v1h-2zM6 65h2v1h-2zM12 65h2v1h-2zM18 65h2v1h-2zM24 65h2v1h-2zM30 65h2v1h-2zM36 65h2v1h-2zM42 65h2v1h-2zM48 65h2v1h-2zM54 65h2v1h-2zM60 65h2v1h-2zM66 65h2v1h-2zM72 65h2v1h-2zM78 65h2v1h-2zM84 65h2v1h-2zM90 65h2v1h-2zM96 65h2v1h-2zM102 65h2v1h-2zM108 65h2v1h-2zM114 65h2v1h-2zM120 65h2v1h-2zM126 65h2v1h-2zM132 65h2v1h-2zM138 65h2v1h-2zM144 65h2v1h-2zM150 65h2v1h-2zM156 65h2v1h-2zM162 65h2v1h-2zM168 65h2v1h-2zM174 65h2v1h-2zM180 65h2v1h-2zM186 65h2v1h-2zM192 65h2v1h-2zM198 65h2v1h-2zM204 65h2v1h-2zM210 65h2v1h-2zM216 65h2v1h-2zM222 65h2v1h-2zM228 65h2v1h-2zM234 65h2v1h-2zM240 65h2v1h-2zM246 65h2v1h-2zM252 65h2v1h-2zM258 65h2v1h-2zM264 65h2v1h-2zM270 65h2v1h-2zM276 65h2v1h-2zM282 65h2v1h-2zM288 65h2v1h-2zM294 65h2v1h-2zM300 65h2v1h-2zM306 65h2v1h-2zM312 65h2v1h-2zM318 65h2v1h-2zM324 65h2v1h-2zM330 65h2v1h-2zM336 65h2v1h-2zM342 65h2v1h-2zM348 65h2v1h-2zM354 65h2v1h-2zM360 65h2v1h-2zM366 65h2v1h-2zM372 65h2v1h-2zM378 65h2v1h-2zM384 65h2v1h-2zM390 65h2v1h-2zM396 65h2v1h-2zM402 65h2v1h-2zM408 65h2v1h-2zM414 65h2v1h-2zM420 65h2v1h-2zM426 65h2v1h-2zM432 65h2v1h-2zM438 65h2v1h-2zM444 65h2v1h-2zM450 65h2v1h-2zM456 65h2v1h-2zM462 65h2v1h-2zM468 65h2v1h-2zM474 65h2v1h-2zM480 65h2v1h-2zM486 65h2v1h-2zM492 65h2v1h-2zM498 65h2v1h-2zM504 65h2v1h-2zM510 65h2v1h-2zM516 65h2v1h-2zM522 65h2v1h-2zM528 65h2v1h-2zM534 65h2v1h-2zM540 65h2v1h-2zM546 65h2v1h-2zM552 65h2v1h-2zM558 65h2v1h-2zM564 65h2v1h-2zM570 65h2v1h-2zM576 65h2v1h-2zM582 65h2v1h-2zM588 65h2v1h-2zM594 65h2v1h-2zM600 65h2v1h-2zM606 65h2v1h-2zM612 65h2v1h-2zM618 65h2v1h-2zM624 65h2v1h-2zM630 65h2v1h-2zM636 65h2v1h-2zM642 65h2v1h-2zM648 65h2v1h-2zM654 65h2v1h-2zM660 65h2v1h-2zM666 65h2v1h-2zM672 65h2v1h-2zM678 65h2v1h-2zM684 65h2v1h-2zM690 65h2v1h-2zM696 65h2v1h-2zM702 65h2v1h-2zM708 65h2v1h-2zM714 65h2v1h-2zM720 65h2v1h-2zM726 65h2v1h-2zM732 65h2v1h-2zM738 65h2v1h-2zM744 65h2v1h-2zM750 65h2v1h-2zM756 65h2v1h-2zM762 65h2v1h-2zM768 65h2v1h-2zM774 65h2v1h-2zM780 65h2v1h-2zM786 65h2v1h-2zM792 65h2v1h-2zM798 65h2v1h-2zM804 65h2v1h-2zM810 65h2v1h-2zM816 65h2v1h-2zM822 65h2v1h-2zM828 65h2v1h-2zM834 65h2v1h-2zM840 65h2v1h-2zM846 65h2v1h-2zM852 65h2v1h-2zM858 65h2v1h-2zM864 65h2v1h-2zM870 65h2v1h-2z"/><path fill="#808080" d="M19 39h1v27h-1zM19 39h1v1h-1zM18 40h1v1h-1zM18 41h1v1h-1zM17 42h1v1h-1zM16 43h1v1h-1zM15 44h1v1h-1zM15 45h1v1h-1zM14 46h1v1h-1zM13 47h1v1h-1zM12 48h1v1h-1zM12 49h1v1h-1zM11 50h1v1h-1zM10 51h1v1h-1zM19 39h1v1h-1zM20 40h1v1h-1zM20 41h1v1h-1zM21 42h1v1h-1zM22 43h1v1h-1zM23 44h1v1h-1zM23 45h1v1h-1zM24 46h1v1h-1zM25 47h1v1h-1zM26 48h1v1h-1zM26 49h1v1h-1zM27 50h1v1h-1zM28 51h1v1h-1z"/><path fill="#cc0000" d="M4 19h868v1h-868z"/><path fill="#00cccc" d="M4 73h868v1h-868z"/><path fill="#00cc33" d="M4 129h189v1h-189zM193 176h156v1h-156zM349 129h117v1h-117zM465 176h407v1h-407zM192 129h1v24h-1zM193 153h1v24h-1zM242 129h1v48h-1zM243 153h1v24h-1zM348 153h1v24h-1zM349 129h1v24h-1zM465 129h1v48h-1zM488 153h1v24h-1zM489 129h1v48h-1zM653 153h1v24h-1zM654 129h1v48h-1z"/><path fill="#6600cc" d="M4 193h868v1h-868z"/><path fill="#cc9900" d="M4 310h868v1h-868zM76 264h1v47h-1zM77 287h1v24h-1zM78 264h1v47h-1zM79 264h1v47h-1zM158 264h1v47h-1zM159 287h1v24h-1zM160 264h1v47h-1zM161 264h1v47h-1zM242 264h1v47h-1zM243 287h1v24h-1zM244 264h1v47h-1zM322 264h1v47h-1zM323 264h1v47h-1zM324 287h1v24h-1zM406 264h1v47h-1zM407 264h1v47h-1zM408 264h1v47h-1zM486 287h1v24h-1zM487 264h1v47h-1zM488 264h1v47h-1zM489 264h1v47h-1zM490 264h1v47h-1zM570 287h1v24h-1zM571 264h1v47h-1zM653 287h1v24h-1zM654 264h1v47h-1zM657 264h1v47h-1zM733 264h1v47h-1zM734 287h1v24h-1zM735 287h1v24h-1zM736 264h1v47h-1zM737 287h1v24h-1zM743 264h1v47h-1zM744 287h1v24h-1zM816 287h1v24h-1zM817 264h1v47h-1zM818 264h1v47h-1zM833 287h1v24h-1zM834 264h1v47h-1z"/><path fill="#66cc00" d="M4 336h189v1h-189zM193 383h156v1h-156zM349 336h117v1h-117zM465 383h407v1h-407zM192 336h1v24h-1zM193 360h1v24h-1zM242 336h1v48h-1zM243 360h1v24h-1zM348 360h1v24h-1zM349 336h1v24h-1zM465 336h1v48h-1zM488 360h1v24h-1zM489 336h1v48h-1zM653 360h1v24h-1zM654 336h1v48h-1z"/><path fill="#cc0099" d="M4 252h868v1h-868z"/><path fill="#0033cc" d="M4 431h49v1h-49zM53 384h55v1h-55zM108 431h443v1h-443zM551 384h118v1h-118zM668 431h163v1h-163zM830 384h42v1h-42zM52 408h1v24h-1zM53 384h1v24h-1zM107 384h1v24h-1zM108 408h1v24h-1zM242 384h1v48h-1zM243 408h1v24h-1zM406 408h1v24h-1zM407 384h1v48h-1zM408 384h1v48h-1zM488 408h1v24h-1zM489 384h1v48h-1zM550 408h1v24h-1zM551 384h1v24h-1zM668 384h1v48h-1zM830 384h1v48h-1z"/><g font-family="'DejaVu Sans','Liberation Sans',sans-serif" font-size="13.333" fill-opacity=".93"><text x="5" y="34.4" fill="#cc0000">parport.0.pin-02-in</text><text x="5" y="55.4" fill="#cc0000">1 /div</text><text x="5" y="88.4" fill="#00cccc">parport.0.pin-03-in</text><text x="5" y="109.4" fill="#00cccc">1 /div</text><text x="5" y="144.4" fill="#00cc33">parport.0.pin-08-in</text><text x="5" y="165.4" fill="#00cc33">1 /div</text><text x="5" y="208.4" fill="#6600cc">parport.0.pin-05-in</text><text x="5" y="229.4" fill="#6600cc">1 /div</text><text x="5" y="285.4" fill="#cc9900">parport.0.pin-06-in</text><text x="5" y="306.4" fill="#cc9900">1 /div</text><text x="5" y="351.4" fill="#66cc00">encoder.0.phase-A</text><text x="5" y="372.4" fill="#66cc00">1 /div</text><text x="5" y="391.4" fill="#cc0099">saw-down</text><text x="5" y="412.4" fill="#cc0099">1 /div</text><text x="5" y="447.4" fill="#0033cc">encoder.0.phase-B</text><text x="5" y="468.4" fill="#0033cc">1 /div</text></g><path shape-rendering="geometricPrecision" d="M678.8 339.5L678.8 356L682.4 352.5L684.6 357.2L687 356L684.9 351L689.9 350.7Z" fill="#1c1c1c" stroke="#fff" stroke-width="1.2" stroke-linejoin="miter" stroke-miterlimit="6"/></svg>
<div style="left:0;top:631px;width:872px;height:1px;background:#e6e6e6"></div>
<div class="chb" style="left:1px;top:632px;width:52px;height:29px;border-color:#8c0000;background:linear-gradient(#de0000,#c60000)"><div class="t" style="top:8px;left:21.20px;">1</div></div>
<div class="chb" style="left:55px;top:632px;width:52px;height:29px;border-color:#008a8e;background:linear-gradient(#00dada,#00bec4)"><div class="t" style="top:8px;left:21.20px;">2</div></div>
<div class="chb" style="left:109px;top:632px;width:52px;height:29px;border-color:#458c00;background:linear-gradient(#6eda00,#62c600)"><div class="t" style="top:8px;left:21.20px;">3</div></div>
<div class="chb" style="left:163px;top:632px;width:52px;height:29px;border-color:#45008c;background:linear-gradient(#6e00da,#6200c6)"><div class="t" style="top:8px;left:21.20px;">4</div></div>
<div class="chb" style="left:217px;top:632px;width:52px;height:29px;border-color:#8c6900;background:linear-gradient(#daa300,#c69400)"><div class="t" style="top:8px;left:21.20px;">5</div></div>
<div class="chb" style="left:271px;top:632px;width:52px;height:29px;border-color:#86a3c4;background:linear-gradient(#00da37,#00c632)"><div class="t" style="top:8px;left:21.20px;">6</div></div>
<div class="chb" style="left:325px;top:632px;width:52px;height:29px;border-color:#00238c;background:linear-gradient(#0037da,#0032c6)"><div class="t" style="top:8px;left:21.20px;">7</div></div>
<div class="chb" style="left:379px;top:632px;width:52px;height:29px;border-color:#8c0069;background:linear-gradient(#da00a3,#c60094)"><div class="t" style="top:8px;left:21.20px;">8</div></div>
<div class="btn " style="left:433px;top:632px;width:52px;height:29px"><div class="t" style="top:7px;left:20.20px;">9</div></div>
<div class="btn " style="left:487px;top:632px;width:52px;height:29px"><div class="t" style="top:7px;left:16.00px;transform:scaleX(1.0400);transform-origin:0 0;">10</div></div>
<div class="btn " style="left:541px;top:632px;width:52px;height:29px"><div class="t" style="top:7px;left:16.00px;transform:scaleX(1.0400);transform-origin:0 0;">11</div></div>
<div class="btn " style="left:595px;top:632px;width:52px;height:29px"><div class="t" style="top:7px;left:16.00px;transform:scaleX(1.0400);transform-origin:0 0;">12</div></div>
<div class="btn " style="left:649px;top:632px;width:52px;height:29px"><div class="t" style="top:7px;left:16.00px;transform:scaleX(1.0400);transform-origin:0 0;">13</div></div>
<div class="btn " style="left:703px;top:632px;width:52px;height:29px"><div class="t" style="top:7px;left:16.00px;transform:scaleX(1.0400);transform-origin:0 0;">14</div></div>
<div class="btn " style="left:757px;top:632px;width:52px;height:29px"><div class="t" style="top:7px;left:16.00px;transform:scaleX(1.0400);transform-origin:0 0;">15</div></div>
<div class="btn " style="left:811px;top:632px;width:60px;height:29px"><div class="t" style="top:7px;left:20.00px;transform:scaleX(1.0400);transform-origin:0 0;">16</div></div>
<div class="frame lt" style="left:1px;top:674px;width:871px;height:42px"></div><div class="frame" style="left:0px;top:673px;width:871px;height:42px"></div><div class="gap" style="left:4px;top:673px;width:119px;height:2px"></div>
<div class="t" style="top:666px;left:5.00px;">Selected Channel</div>
<div class="t" style="top:692px;left:10.40px;transform:scaleX(1.1778);transform-origin:0 0;">--</div>
<div class="sepv" style="left:33px;top:684px;height:28px"></div>
<div class="btn " style="left:42px;top:684px;width:384px;height:29px"><div class="t" style="top:7px;left:174.00px;transform:scaleX(1.2143);transform-origin:0 0;">------</div></div>
<div class="frame lt" style="left:873px;top:73px;width:75px;height:103px"></div><div class="frame" style="left:872px;top:72px;width:75px;height:103px"></div><div class="gap" style="left:876px;top:72px;width:68px;height:2px"></div>
<div class="t" style="top:65px;left:877.02px;transform:scaleX(0.9846);transform-origin:0 0;">Run Mode</div>
<div class="radio" style="left:877px;top:87px"></div>
<div class="t" style="top:87px;left:895.02px;transform:scaleX(0.9783);transform-origin:0 0;">Normal</div>
<div class="radio" style="left:877px;top:110px"></div>
<div class="t" style="top:110px;left:895.00px;">Single</div>
<div class="radio" style="left:877px;top:133px"></div>
<div class="t" style="top:133px;left:894.91px;transform:scaleX(1.0909);transform-origin:0 0;">Roll</div>
<div class="radio on" style="left:877px;top:156px"></div>
<div class="t" style="top:156px;left:895.00px;">Stop</div>
<div class="frame lt" style="left:949px;top:73px;width:75px;height:643px"></div><div class="frame" style="left:948px;top:72px;width:75px;height:643px"></div><div class="gap" style="left:952px;top:72px;width:50px;height:2px"></div>
<div class="t" style="top:65px;left:953.00px;transform:scaleX(1.0217);transform-origin:0 0;">Trigger</div>
<div class="radio" style="left:953px;top:87px"></div>
<div class="t" style="top:87px;left:971.00px;">Normal</div>
<div class="radio on" style="left:953px;top:110px"></div>
<div class="t" style="top:110px;left:972.00px;">Auto</div>
<div class="btn " style="left:951px;top:129px;width:70px;height:29px"><div class="t" style="top:7px;left:14.97px;transform:scaleX(1.0294);transform-origin:0 0;">Force</div></div>
<div class="t" style="top:163px;left:951.00px;">Level</div>
<div class="t" style="top:163px;left:993.00px;">Pos</div>
<div class="trk v" style="left:966px;top:183px;height:396px"></div><div class="trk v fill dis" style="left:966px;top:183px;height:198px"></div><div class="knob dis" style="left:962px;top:374px"></div>
<div class="trk v" style="left:1002px;top:183px;height:396px"></div><div class="trk v fill" style="left:1002px;top:183px;height:196px"></div><div class="knob" style="left:998px;top:372px"></div>
<div class="seph" style="left:950px;top:584px;width:72px"></div>
<div class="t" style="top:593px;left:969.00px;">Level</div>
<div class="t" style="top:614px;left:975.00px;transform:scaleX(1.1579);transform-origin:0 0;">----</div>
<div class="btn " style="left:951px;top:632px;width:70px;height:29px"><div class="t" style="top:7px;left:15.05px;transform:scaleX(0.9474);transform-origin:0 0;">Rising</div></div>
<div class="btn " style="left:951px;top:663px;width:70px;height:50px"><div class="t" style="top:7px;left:8.98px;transform:scaleX(1.0227);transform-origin:0 0;">Source</div><div class="t" style="top:28px;left:10.06px;transform:scaleX(0.9388);transform-origin:0 0;">Chan  1</div></div>
<div class="frame lt" style="left:873px;top:189px;width:75px;height:527px"></div><div class="frame" style="left:872px;top:188px;width:75px;height:527px"></div><div class="gap" style="left:876px;top:188px;width:54px;height:2px"></div>
<div class="t" style="top:180px;left:878.00px;transform:scaleX(1.0204);transform-origin:0 0;">Vertical</div>
<div class="t" style="top:201px;left:877.07px;transform:scaleX(0.9310);transform-origin:0 0;">Gain</div>
<div class="t" style="top:201px;left:917.00px;">Pos</div>
<div class="trk v" style="left:890px;top:221px;height:358px"></div><div class="trk v fill" style="left:890px;top:221px;height:179px"></div><div class="knob" style="left:886px;top:393px"></div>
<div class="trk v" style="left:926px;top:221px;height:358px"></div><div class="trk v fill" style="left:926px;top:221px;height:291px"></div><div class="knob" style="left:922px;top:505px"></div>
<div class="seph" style="left:874px;top:584px;width:72px"></div>
<div class="t" style="top:593px;left:892.00px;">Scale</div>
<div class="t" style="top:614px;left:899.00px;transform:scaleX(1.1579);transform-origin:0 0;">----</div>
<div class="btn " style="left:875px;top:632px;width:70px;height:50px"><div class="t" style="top:7px;left:11.95px;transform:scaleX(1.0513);transform-origin:0 0;">Offset</div><div class="t" style="top:28px;left:13.00px;transform:scaleX(1.1579);transform-origin:0 0;">----</div></div>
<div class="btn " style="left:875px;top:684px;width:70px;height:29px"><div class="t" style="top:7px;left:5.02px;transform:scaleX(0.9828);transform-origin:0 0;">Chan Off</div></div>
<div style="left:0;top:716px;width:1024px;height:1px;background:#3f4f61"></div>
</div></body></html>
